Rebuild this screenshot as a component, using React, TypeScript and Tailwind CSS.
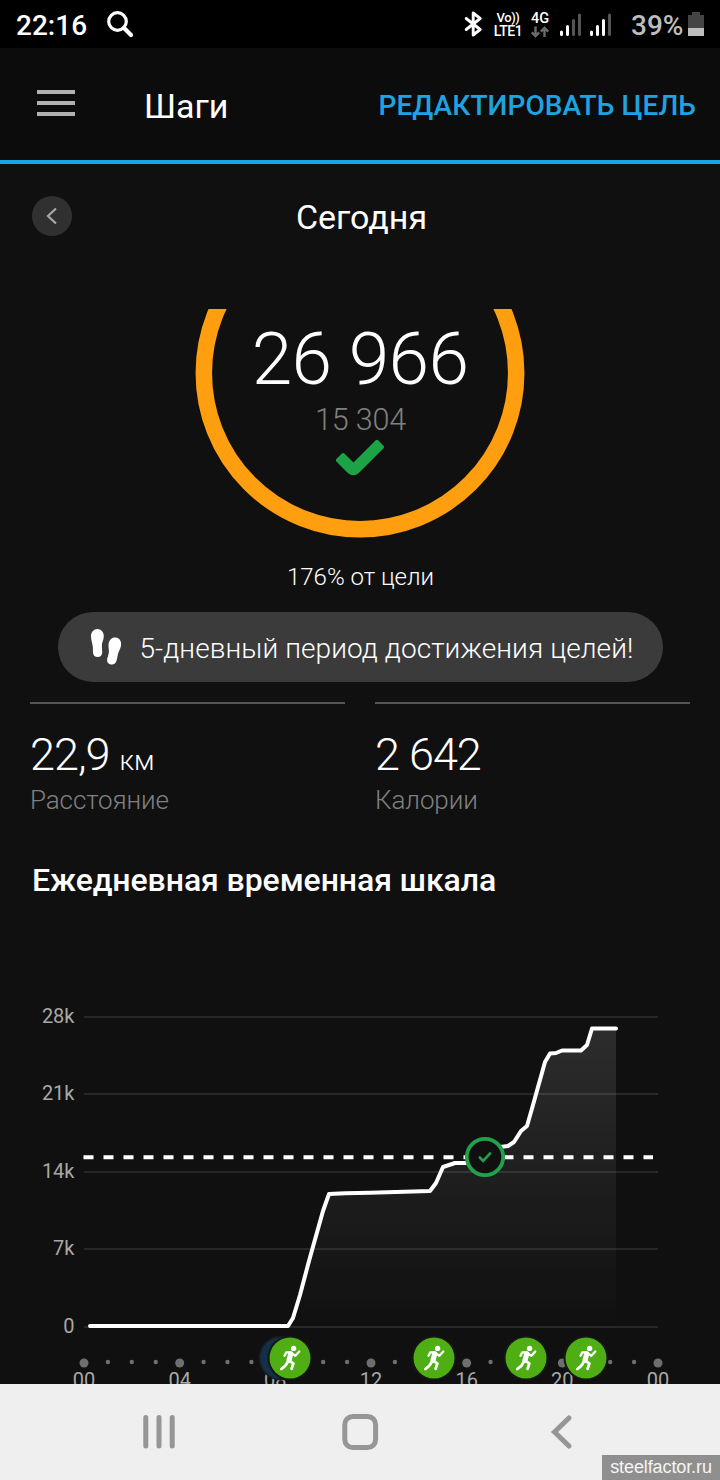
import type { ReactNode } from "react"

const gridLines = [
    { label: '28k', y: 77 },
    { label: '21k', y: 154 },
    { label: '14k', y: 232 },
    { label: '7k', y: 309 },
    { label: '0', y: 387 },
]

const hours = ['00', '04', '08', '12', '16', '20', '00']

const activities = [290, 434, 526, 586]

const steps = '90,386 288,386 293,378 300,355 309,321 323,271 329,254 345,253.2 370,252.8 430,251 436,243 443,227 449,225 455,223 468,223 500,207 508,206 514,202 521,191 527,186 533,165 545,122 550,113.5 556,113 562,110.5 581,110.5 587,105 592,88.5 616,88.5'

const hourStep = 574 / 24

const StatusBar = () => {
    return (
        <div className="flex h-12 items-center bg-black text-white">
            <span className="ml-4 w-[71px] text-[28px] leading-none font-medium whitespace-nowrap mt-[3px]">22:16</span>
            <svg className="ml-[19px]" width="30" height="48" viewBox="0 0 30 48" fill="none" stroke="#fff">
                <circle cx="11.500" cy="21.500" r="8.800" strokeWidth="3.200" />
                <path d="M18 28l7 7" strokeWidth="4.200" strokeLinecap="round" />
            </svg>
            <div className="ml-auto flex h-12 w-[256px] items-center">
                <svg width="20" height="48" viewBox="0 0 20 48" fill="none" stroke="#fff" strokeWidth="2.900" strokeLinejoin="round" strokeLinecap="round">
                    <path d="M2.200 18.500l14 11-7 5.500V13l7 5.500-14 11" />
                </svg>
                <div className="ml-[8px] mt-[2px] flex w-[32px] flex-col text-center font-medium whitespace-nowrap">
                    <span className="h-[13px] text-[13px] leading-[11px] tracking-[-0.4px]">Vo))</span>
                    <span className="h-[13px] text-[14px] leading-[13px] tracking-[-0.5px]">LTE1</span>
                </div>
                <div className="ml-[6px] mt-[2px] flex w-[20px] flex-col items-center">
                    <span className="text-[14.5px] leading-[14px] font-medium">4G</span>
                    <svg width="20" height="12" viewBox="0 0 20 12" fill="none" stroke="#6b6b6b" strokeWidth="2.400">
                        <path d="M5.500 0.500v9.500M1.800 6.300l3.700 3.700 3.700-3.700M14.500 11V2M10.800 5.700L14.500 2l3.700 3.700" />
                    </svg>
                </div>
                <svg className="ml-[8px]" width="58" height="48" viewBox="0 0 58 48" strokeWidth="3" strokeLinecap="round">
                    <path d="M4.500 32v2.500M10.500 26.500v8M34.500 32v2.500M40.500 26.500v8M46.500 20.500v14" transform="translate(-1)" stroke="#fff" />
                    <path d="M16.500 20.500v14M22.500 15v19.500M52.500 15v19.500" transform="translate(-1)" stroke="#555" />
                </svg>
                <span className="ml-[15px] w-[57px] text-[28px] leading-none font-medium text-[#bdbdbd] whitespace-nowrap mt-[3px]">39%</span>
                <svg width="16" height="48" viewBox="0 0 16 48">
                    <path d="M4 12h8v3h4v13H0V15h4z" fill="#444" />
                    <path d="M0 28h16v8H0z" fill="#bdbdbd" />
                </svg>
            </div>
        </div>
    )
}

const Header = () => {
    return (
        <header className="flex h-[116px] items-center border-b-4 border-[#17a5e6] bg-[#0c0c0c]">
            <button type="button" className="ml-[37px] flex w-[38px] flex-col gap-[7px] mb-[3px]">
                <span className="h-1 bg-[#b0b0b0]" />
                <span className="h-1 bg-[#b0b0b0]" />
                <span className="h-1 bg-[#b0b0b0]" />
            </button>
            <h1 className="mt-[3px] ml-[69px] text-[34px] leading-none text-white">Шаги</h1>
            <button type="button" className="mt-[4px] mr-[24px] ml-auto text-[28px] leading-none font-medium tracking-[0.1px] text-[#1fa3e0] whitespace-nowrap">РЕДАКТИРОВАТЬ ЦЕЛЬ</button>
        </header>
    )
}

const GoalRing = () => {
    return (
        <div className="relative mx-auto mt-[41px] h-[230px] w-[330px]">
            <svg className="absolute inset-0" width="330" height="230" viewBox="0 0 330 230" fill="none">
                <circle cx="165" cy="64" r="156.200" stroke="#ff9e0f" strokeWidth="16.500" />
            </svg>
            <div className="relative flex flex-col items-center">
                <p className="mt-[12px] text-[73px] leading-[76px] font-light tracking-[-0.6px] text-white whitespace-nowrap">26 966</p>
                <p className="mt-[6px] ml-[1px] text-[30.5px] leading-[34px] font-light tracking-[-0.2px] text-[#808080]">15 304</p>
                <svg className="mt-[2px]" width="50" height="38" viewBox="0 0 50 38">
                    <path d="M1.600 19.700l5-5q1.500-1.500 3 0L18.500 23.500 40.500 1.600q1.500-1.500 3 0l4.800 4.800q1.500 1.500 0 3L23.800 34q-5.500 4.500-11 0L1.600 22.700q-1.500-1.500 0-3z" fill="#1ca345" />
                </svg>
            </div>
        </div>
    )
}

const Footprints = () => {
    return (
        <svg width="32" height="38" viewBox="0 0 32 38" fill="#fff">
            <path d="M7.500 1C11 1 13.800 4 13.800 8c0 4-2 6-1.900 10 0 3 .4 4 .3 6.500C12 27.500 10.400 29 7.700 29S3.200 27.500 3 24.500C2.800 22 3.200 20 2.500 17 2 14 1 11.500 1 8 1 4 4 1 7.500 1z" />
            <path d="M25.500 9.500c4 .5 6.200 3.700 5.500 8-.6 3.600-2.200 5.500-3 8.500-.6 2.300-.6 4-1.400 6.500-.9 3-2.800 4.500-5.600 4-2.700-.4-4.300-2.500-3.900-5 .3-2.500 1.600-4.500 1.800-7.500.2-2.800-.8-5-.3-8.300.6-4 3.400-6.600 6.900-6.200z" />
        </svg>
    )
}

interface IStatProps {
    value: ReactNode
    label: string
}

const Stat = ({ value, label }: IStatProps) => {
    return (
        <div className="h-[120px] w-[315px] border-t-2 border-[#555]">
            <p className="mt-[26px] h-[50px] text-[45px] leading-[50px] font-light tracking-[-1px] text-white whitespace-nowrap">{value}</p>
            <p className="mt-[5px] text-[26px] leading-[30px] font-light tracking-[-0.1px] text-[#808080]">{label}</p>
        </div>
    )
}

const Runner = ({ x }: { x: number }) => {
    return (
        <g transform={`translate(${x} 418)`}>
            <circle r="22.500" fill="#161616" />
            <circle r="20.500" fill="#4fae14" />
            <circle cx="3.600" cy="-9.600" r="2.700" fill="#fff" />
            <g fill="none" stroke="#fff" strokeLinecap="round" strokeLinejoin="round">
                <path d="M0.800-4.200L-1 2.200" strokeWidth="5.200" />
                <path d="M0-5.600H-3.700L-5.500-2.300M2-4.400L5.400-2.200 9.300-6.500" strokeWidth="2.300" />
                <path d="M-1 2.600L3.400 5.400 1.600 10.800M-2 3.600L-4.500 7.600-8.600 11" strokeWidth="2.800" />
            </g>
        </g>
    )
}

const Timeline = () => {
    return (
        <svg className="block" width="720" height="444" viewBox="0 0 720 444">
            <defs>
                <linearGradient id="area" x1="0" y1="0" x2="0" y2="1">
                    <stop offset="0" stopColor="#fff" stopOpacity="0.120" />
                    <stop offset="1" stopColor="#fff" stopOpacity="0" />
                </linearGradient>
            </defs>
            <polygon points={`${steps} 616,386`} fill="url(#area)" />
            {gridLines.map(line => (
                <g key={line.label}>
                    <path d={`M84 ${line.y}H658`} stroke="#fff" strokeOpacity="0.100" strokeWidth="2" />
                    <text x="74.500" y={line.y + 6} textAnchor="end" fontSize="20" fill="#a8a8a8">{line.label}</text>
                </g>
            ))}
            <path d="M83.500 217.300H653" stroke="#fff" strokeWidth="4" strokeDasharray="10 10" />
            <polyline points={steps} fill="none" stroke="#fff" strokeWidth="4" strokeLinejoin="round" strokeLinecap="round" />
            <circle cx="485" cy="217" r="18.200" fill="#101010" stroke="#22a04a" strokeWidth="3.800" />
            <path d="M479.800 217.500l3.300 3.300 7-7.300" fill="none" stroke="#22a04a" strokeWidth="2.600" strokeLinecap="round" />
            {Array.from({ length: 25 }, (_, i) => (
                <circle key={i} cx={84 + i * hourStep} cy={i % 4 ? 422 : 423} r={i % 4 ? 2.2 : 4.5} fill="#6e6e6e" />
            ))}
            {hours.map((hour, i) => (
                <text key={i} x={84 + i * 4 * hourStep} y="447" textAnchor="middle" fontSize="20" fill="#a8a8a8">{hour}</text>
            ))}
            <circle cx="281" cy="418" r="22.500" fill="#1a1a1a" />
            <circle cx="281" cy="418" r="20.800" fill="#12304a" />
            {activities.map(x => <Runner key={x} x={x} />)}
        </svg>
    )
}

const NavBar = () => {
    return (
        <nav className="relative h-24 bg-[#efefef]">
            <svg width="720" height="96" viewBox="0 0 720 96" fill="none" stroke="#969696" strokeWidth="5" strokeLinecap="round">
                <path d="M145.800 33.500v28.500M159 33.500v28.500M172.200 33.500v28.500" />
                <rect x="344.800" y="32.500" width="30.800" height="31" rx="8" />
                <path d="M569 34L554.500 48 569 62" />
            </svg>
            <div className="absolute right-0 bottom-0 flex h-[25px] w-[118px] items-center justify-center bg-[#8f8f8f] font-['Liberation_Sans',sans-serif] text-[18px] tracking-[-0.1px] text-[#f5f5f5]">steelfactor.ru</div>
        </nav>
    )
}

const App = () => {
    return (
        <div className="flex h-[1480px] w-[720px] flex-col overflow-hidden bg-[#101010] font-[Roboto,sans-serif]">
            <StatusBar />
            <Header />
            <main className="h-[1220px] overflow-hidden">
                <div className="grid h-[104px] grid-cols-[40px_1fr_40px] items-center px-8">
                    <button type="button" className="flex size-10 items-center justify-center rounded-full bg-[#303030]">
                        <svg width="12" height="18" viewBox="0 0 12 18" fill="none" stroke="#a8a8a8" strokeWidth="2.200">
                            <path d="M10 1.500L2 9l8 7.500" />
                        </svg>
                    </button>
                    <h2 className="pl-[3px] pt-[1px] text-center text-[34px] leading-none text-white">Сегодня</h2>
                </div>
                <GoalRing />
                <p className="mt-[23px] ml-[1px] text-center text-[24px] leading-[30px] font-light text-white">176% от цели</p>
                <div className="mx-auto mt-[20px] flex h-[70px] w-[605px] items-center rounded-full bg-[#3b3b3b] pl-8">
                    <Footprints />
                    <span className="ml-[18px] pt-[3px] text-[28px] font-light tracking-[0.08px] text-white whitespace-nowrap">5-дневный период достижения целей!</span>
                </div>
                <div className="mx-[30px] mt-5 flex justify-between">
                    <Stat value={<>22,9 <span className="text-[28px] tracking-[0]">км</span></>} label="Расстояние" />
                    <Stat value="2 642" label="Калории" />
                </div>
                <h3 className="mt-[38px] ml-8 h-[80px] text-[32px] leading-[40px] font-medium tracking-[-0.08px] text-white">Ежедневная временная шкала</h3>
                <Timeline />
            </main>
            <NavBar />
        </div>
    )
}

export default App
